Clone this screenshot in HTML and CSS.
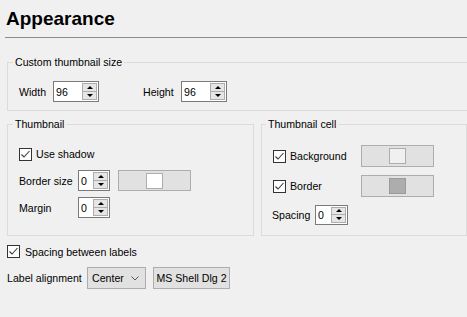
FILE: index.html
```html
<!DOCTYPE html>
<html>
<head>
<meta charset="utf-8">
<link rel="stylesheet" href="styles.css">
</head>
<body>
<div class="page">
  <h1 class="title">Appearance</h1>
  <div class="rule"></div>

  <fieldset class="group group-size">
    <legend>Custom thumbnail size</legend>
    <div class="size-row">
      <span class="lbl">Width</span>
      <div class="spin spin-wide"><span class="val">96</span><span class="btns"><span class="sb up"><i></i></span><span class="sb down"><i></i></span></span></div>
      <span class="lbl lbl-height">Height</span>
      <div class="spin spin-wide"><span class="val">96</span><span class="btns"><span class="sb up"><i></i></span><span class="sb down"><i></i></span></span></div>
    </div>
  </fieldset>

  <div class="groups">
    <fieldset class="group group-thumb">
      <legend>Thumbnail</legend>
      <div class="thumb-grid">
        <label class="check-row row-shadow"><span class="cb"><svg viewBox="0 0 11 11" width="11" height="11"><path d="M1.5 5.5 L4 8 L9.5 2" fill="none" stroke="#3c3c3c" stroke-width="1.1"/></svg></span><span>Use shadow</span></label>
        <span class="lbl">Border size</span>
        <div class="spin spin-narrow"><span class="val">0</span><span class="btns"><span class="sb up"><i></i></span><span class="sb down"><i></i></span></span></div>
        <div class="colorbtn"><span class="swatch"></span></div>
        <span class="lbl">Margin</span>
        <div class="spin spin-narrow"><span class="val">0</span><span class="btns"><span class="sb up"><i></i></span><span class="sb down"><i></i></span></span></div>
      </div>
    </fieldset>

    <fieldset class="group group-cell">
      <legend>Thumbnail cell</legend>
      <div class="cell-grid">
        <label class="check-row"><span class="cb"><svg viewBox="0 0 11 11" width="11" height="11"><path d="M1.5 5.5 L4 8 L9.5 2" fill="none" stroke="#3c3c3c" stroke-width="1.1"/></svg></span><span>Background</span></label>
        <div class="colorbtn colorbtn-cell"><span class="swatch swatch-light"></span></div>
        <label class="check-row"><span class="cb"><svg viewBox="0 0 11 11" width="11" height="11"><path d="M1.5 5.5 L4 8 L9.5 2" fill="none" stroke="#3c3c3c" stroke-width="1.1"/></svg></span><span>Border</span></label>
        <div class="colorbtn colorbtn-cell"><span class="swatch swatch-gray"></span></div>
        <div class="spacing-row">
          <span class="lbl lbl-spacing">Spacing</span>
          <div class="spin spin-small"><span class="val">0</span><span class="btns"><span class="sb up"><i></i></span><span class="sb down"><i></i></span></span></div>
        </div>
      </div>
    </fieldset>
  </div>

  <label class="check-row row-labels"><span class="cb"><svg viewBox="0 0 11 11" width="11" height="11"><path d="M1.5 5.5 L4 8 L9.5 2" fill="none" stroke="#3c3c3c" stroke-width="1.1"/></svg></span><span>Spacing between labels</span></label>

  <div class="align-row">
    <span class="lbl lbl-align">Label alignment</span>
    <div class="combo"><span>Center</span><svg width="8" height="5" viewBox="0 0 8 5"><path d="M0.5 0.5 L4 4 L7.5 0.5" fill="none" stroke="#555" stroke-width="1"/></svg></div>
    <div class="fontbtn">MS Shell Dlg 2</div>
  </div>
</div>
</body>
</html>
```

FILE: styles.css
```css
html, body {
  margin: 0;
  padding: 0;
  overflow: hidden;
}
body {
  background: #f0f0f0;
  font-family: "Liberation Sans", Arial, sans-serif;
  font-size: 10.6px;
  color: #000;
  width: 467px;
  height: 317px;
}
.page {
  display: flex;
  flex-direction: column;
  align-items: flex-start;
}
.title {
  margin: 0 0 0 6px;
  padding-top: 8px;
  font-size: 19px;
  line-height: 22px;
  font-weight: bold;
}
.rule {
  align-self: stretch;
  margin: 7px 0 0 5px;
  height: 1px;
  background: #8c8c8c;
}
.group {
  box-sizing: border-box;
  margin: 0;
  border: 1px solid #dcdcdc;
  padding: 0;
  min-width: 0;
}
.group legend {
  padding: 0 2px;
  margin-left: -6px;
  line-height: 13px;
}
.group-size {
  margin: 18px -20px 0 7px;
  align-self: stretch;
  padding: 12px 11px 8px 11px;
}
.size-row {
  display: grid;
  grid-template-columns: 34px 46px 44px 38px 46px;
  align-items: center;
}
.lbl-height { grid-column: 4; }
.lbl { white-space: nowrap; }

.spin {
  box-sizing: border-box;
  display: flex;
  align-items: stretch;
  height: 21px;
  border: 1px solid #7a7a7a;
  background: #fff;
  padding: 1px 1px 1px 0;
}
.spin-wide { width: 46px; }
.spin-narrow { width: 32px; }
.spin-small { width: 33px; height: 20px; }
.val {
  flex: 1;
  padding-left: 2px;
  display: flex;
  align-items: center;
}
.btns {
  display: flex;
  flex-direction: column;
  width: 15px;
}
.sb {
  flex: 1;
  box-sizing: border-box;
  border: 1px solid #adadad;
  background: #e5e5e5;
  display: flex;
  align-items: center;
  justify-content: center;
}
.sb.down { border-top: none; }
.sb i {
  display: block;
  width: 0;
  height: 0;
  border-left: 3px solid transparent;
  border-right: 3px solid transparent;
}
.sb.up i { border-bottom: 3px solid #000; }
.sb.down i { border-top: 3px solid #000; }

.groups {
  box-sizing: border-box;
  width: 467px;
  display: grid;
  grid-template-columns: 247px 206px;
  column-gap: 7px;
  margin: 7px 0 0 0;
  padding-left: 7px;
}
.groups .group {
  width: 100%;
}
.group-thumb {
  padding: 13px 8px 16px 11px;
}
.thumb-grid {
  display: grid;
  grid-template-columns: 51px 32px 73px;
  grid-template-rows: 20px 21px 21px;
  column-gap: 8px;
  row-gap: 6px;
  align-items: center;
}
.row-shadow { grid-column: 1 / 4; }

.check-row {
  display: flex;
  align-items: center;
  gap: 4px;
  white-space: nowrap;
}
.cb {
  box-sizing: border-box;
  width: 13px;
  height: 13px;
  border: 1px solid #333;
  background: #fff;
  display: flex;
  align-items: center;
  justify-content: center;
  flex: none;
}
.cb svg { display: block; }

.colorbtn {
  box-sizing: border-box;
  width: 73px;
  height: 21px;
  background: #e1e1e1;
  border: 1px solid #adadad;
  display: flex;
  align-items: center;
  justify-content: center;
}
.colorbtn-cell { height: 22px; }
.swatch {
  box-sizing: border-box;
  width: 17px;
  height: 16px;
  background: #fff;
  border: 1px solid #adadad;
}
.swatch-light { background: #f0f0f0; }
.swatch-gray { background: #adadad; border-color: #9a9a9a; }

.group-cell {
  padding: 14px 8px 10px 10px;
}
.cell-grid {
  display: grid;
  grid-template-columns: 89px 73px;
  grid-template-rows: 22px 22px 20px;
  row-gap: 8px;
  align-items: center;
}
.cell-grid .check-row { padding-left: 1px; }
.spacing-row {
  grid-column: 1 / 3;
  display: flex;
  align-items: center;
  margin-top: -1px;
}
.lbl-spacing { width: 43px; }

.row-labels {
  margin: 9px 0 0 7px;
  gap: 5px;
}
.align-row {
  display: flex;
  align-items: center;
  margin: 9px 0 0 7px;
  gap: 7px;
}
.lbl-align { width: 73px; }
.combo {
  box-sizing: border-box;
  width: 59px;
  height: 22px;
  background: #e1e1e1;
  border: 1px solid #adadad;
  display: flex;
  align-items: center;
  justify-content: space-between;
  padding: 0 6px 0 4px;
}
.fontbtn {
  box-sizing: border-box;
  width: 77px;
  height: 22px;
  background: #e1e1e1;
  border: 1px solid #adadad;
  display: flex;
  align-items: center;
  justify-content: center;
  white-space: nowrap;
}
```
